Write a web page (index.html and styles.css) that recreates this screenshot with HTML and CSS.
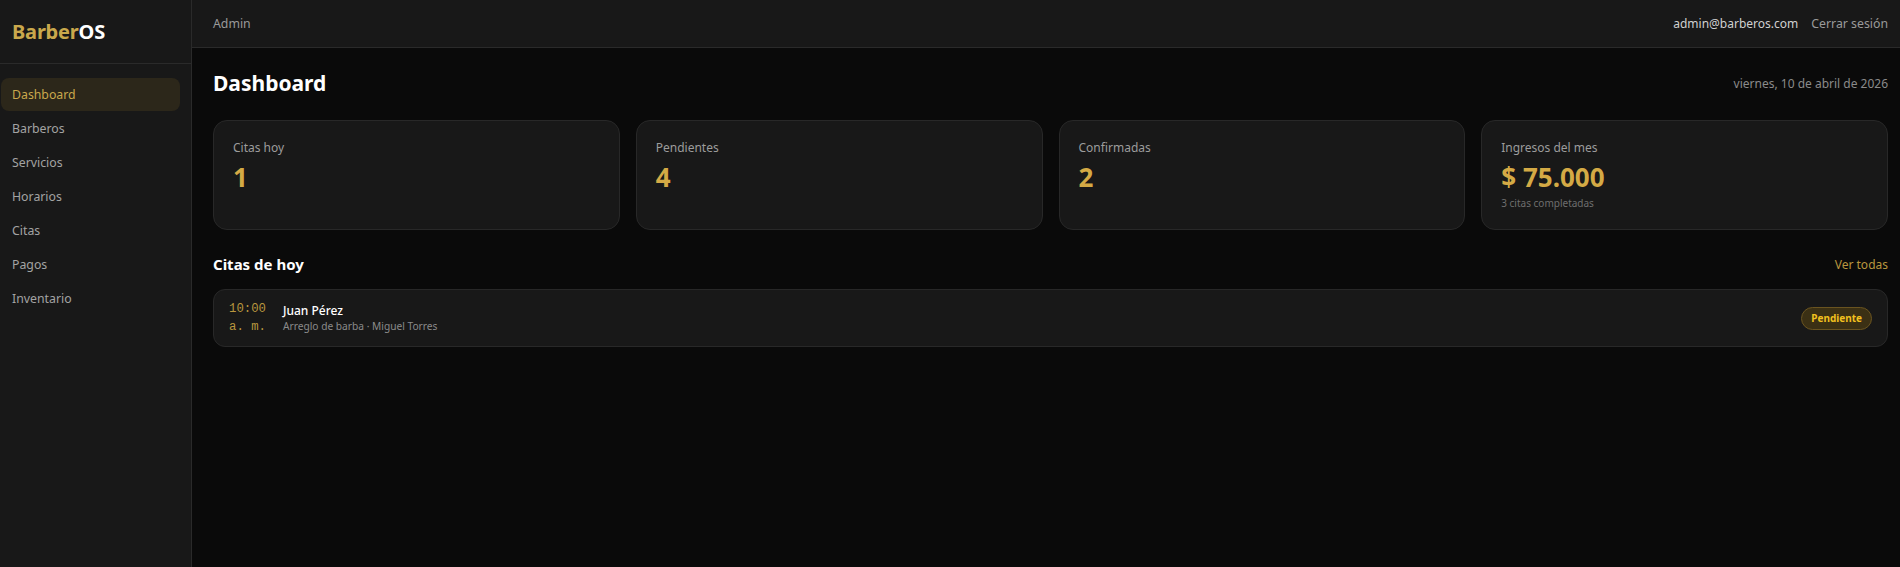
FILE: index.html
```html
<!DOCTYPE html>
<html lang="es">
<head>
<meta charset="utf-8">
<title>BarberOS</title>
<link rel="stylesheet" href="styles.css">
</head>
<body>
<div class="app">
  <aside class="sidebar">
    <div class="logo"><span class="logo-gold">Barber</span>OS</div>
    <nav class="nav">
      <a class="nav-item active">Dashboard</a>
      <a class="nav-item">Barberos</a>
      <a class="nav-item">Servicios</a>
      <a class="nav-item">Horarios</a>
      <a class="nav-item">Citas</a>
      <a class="nav-item">Pagos</a>
      <a class="nav-item">Inventario</a>
    </nav>
  </aside>
  <div class="main">
    <header class="topbar">
      <span class="role">Admin</span>
      <div class="user">
        <span class="email">admin@barberos.com</span>
        <a class="logout">Cerrar sesión</a>
      </div>
    </header>
    <main class="content">
      <div class="page-head">
        <h1 class="title">Dashboard</h1>
        <span class="date">viernes, 10 de abril de 2026</span>
      </div>
      <section class="stats">
        <div class="card">
          <div class="card-label">Citas hoy</div>
          <div class="card-value">1</div>
        </div>
        <div class="card">
          <div class="card-label">Pendientes</div>
          <div class="card-value">4</div>
        </div>
        <div class="card">
          <div class="card-label">Confirmadas</div>
          <div class="card-value">2</div>
        </div>
        <div class="card">
          <div class="card-label">Ingresos del mes</div>
          <div class="card-value">$ 75.000</div>
          <div class="card-sub">3 citas completadas</div>
        </div>
      </section>
      <div class="section-head">
        <h2 class="section-title">Citas de hoy</h2>
        <a class="see-all">Ver todas</a>
      </div>
      <div class="appt">
        <div class="appt-time">10:00<br>a. m.</div>
        <div class="appt-info">
          <div class="appt-name">Juan Pérez</div>
          <div class="appt-detail">Arreglo de barba · Miguel Torres</div>
        </div>
        <span class="badge">Pendiente</span>
      </div>
    </main>
  </div>
</div>
</body>
</html>
```

FILE: styles.css
```css
* { box-sizing: border-box; }
html, body { margin: 0; padding: 0; height: 100%; }
body {
  background: #0a0a0a;
  color: #e8e8e8;
  font-family: "Noto Sans", "Open Sans", sans-serif;
  font-size: 12px;
}
.app { display: flex; min-height: 100vh; }

.sidebar {
  width: 192px;
  flex-shrink: 0;
  background: #181818;
  border-right: 1px solid #2a2a2a;
}
.logo {
  height: 64px;
  padding: 0 12px;
  display: flex;
  align-items: center;
  font-size: 20px;
  font-weight: 700;
  color: #ffffff;
  border-bottom: 1px solid #2a2a2a;
  letter-spacing: -0.2px;
}
.logo-gold { color: #c9a84c; }
.nav {
  display: flex;
  flex-direction: column;
  gap: 1px;
  padding: 14px 11px 0 1px;
}
.nav-item {
  display: block;
  height: 33px;
  line-height: 33px;
  padding-left: 11px;
  border-radius: 8px;
  color: #a3a3a3;
  font-size: 12.3px;
}
.nav-item.active {
  background: #2c271a;
  color: #c9a84c;
}

.main { flex: 1; display: flex; flex-direction: column; min-width: 0; }
.topbar {
  height: 48px;
  display: flex;
  align-items: center;
  justify-content: space-between;
  padding: 0 12px 0 21px;
  background: #181818;
  border-bottom: 1px solid #2a2a2a;
}
.role { color: #9a9a9a; font-size: 12.3px; }
.user { display: flex; gap: 13px; align-items: center; }
.email { color: #d0d0d0; font-size: 12px; }
.logout { color: #9a9a9a; font-size: 12.3px; }

.content { padding: 9px 12px 0 21px; }
.page-head {
  display: flex;
  align-items: center;
  justify-content: space-between;
  height: 52px;
}
.title {
  margin: 0;
  font-size: 21px;
  font-weight: 700;
  color: #ffffff;
}
.date { color: #8a8a8a; font-size: 12px; }

.stats {
  display: grid;
  grid-template-columns: repeat(4, 1fr);
  gap: 16px;
  margin-top: 11px;
}
.card {
  height: 110px;
  background: #181818;
  border: 1px solid #282828;
  border-radius: 14px;
  padding: 18px 19px 16px;
}
.card-label { color: #9c9c9c; font-size: 12px; line-height: 18px; }
.card-value {
  margin-top: 3px;
  color: #d4aa45;
  font-size: 26px;
  font-weight: 700;
  line-height: 34px;
}
.card-sub { margin-top: 2px; color: #6e6e6e; font-size: 10px; line-height: 14px; }

.section-head {
  display: flex;
  align-items: center;
  justify-content: space-between;
  margin-top: 21px;
  height: 26px;
}
.section-title { margin: 0; font-size: 15px; font-weight: 700; color: #ffffff; }
.see-all { color: #b8963e; font-size: 12px; }

.appt {
  margin-top: 12px;
  height: 58px;
  display: flex;
  align-items: center;
  gap: 12px;
  padding: 0 15px 0 15px;
  background: #181818;
  border: 1px solid #282828;
  border-radius: 12px;
}
.appt-time {
  width: 42px;
  font-family: "Liberation Mono", "DejaVu Sans Mono", monospace;
  font-size: 12.3px;
  line-height: 18px;
  color: #b8963e;
}
.appt-info { flex: 1; }
.appt-name { color: #ffffff; font-size: 12px; line-height: 17px; font-weight: 500; }
.appt-detail { color: #8a8a8a; font-size: 10.2px; line-height: 15px; }
.badge {
  display: inline-block;
  padding: 3px 9px;
  border-radius: 999px;
  background: #3b3014;
  border: 1px solid #6a5420;
  color: #f2c01e;
  font-size: 10px;
  font-weight: 700;
  line-height: 15px;
}
```
